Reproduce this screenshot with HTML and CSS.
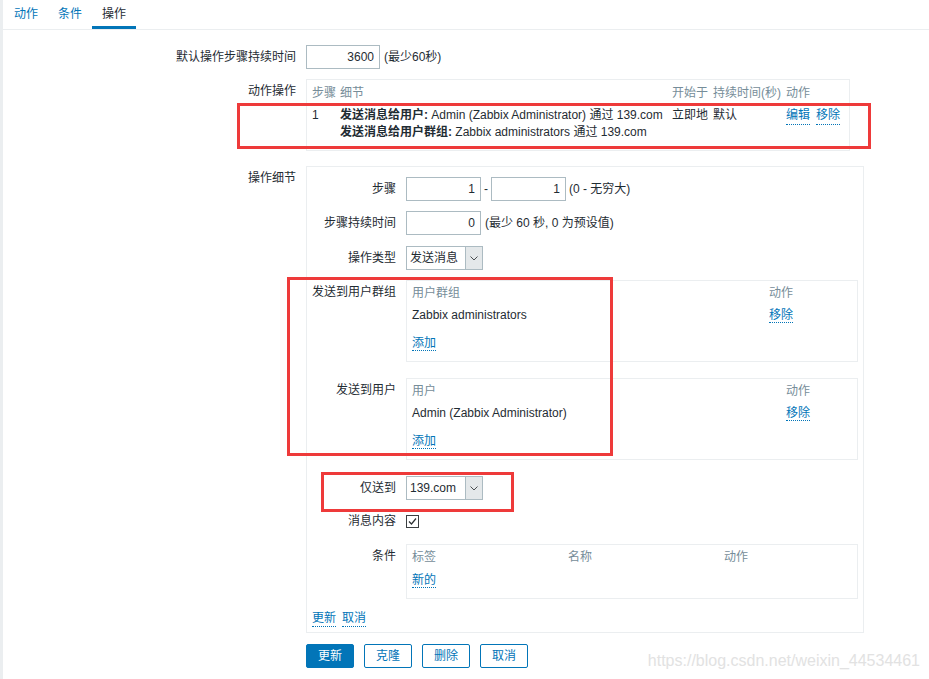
FILE: index.html
```html
<!DOCTYPE html>
<html lang="zh-CN">
<head>
<meta charset="utf-8">
<title>操作</title>
<link rel="stylesheet" href="styles.css">
</head>
<body>
<div class="page">
  <nav class="tabs">
    <a class="tab">动作</a>
    <a class="tab">条件</a>
    <a class="tab active">操作</a>
  </nav>

  <div class="form">
    <div class="row">
      <div class="label">默认操作步骤持续时间</div>
      <div class="field">
        <input class="input w74" value="3600" readonly>
        <span class="hint">(最少60秒)</span>
      </div>
    </div>

    <div class="row gap10">
      <div class="label">动作操作</div>
      <div class="field">
        <div class="ops">
          <div class="ops-grid">
            <div class="th">步骤</div>
            <div class="th">细节</div>
            <div class="th">开始于</div>
            <div class="th">持续时间(秒)</div>
            <div class="th">动作</div>
            <div class="td">1</div>
            <div class="td">
              <div class="nowrap"><b>发送消息给用户:</b> Admin (Zabbix Administrator) 通过 139.com</div>
              <div class="nowrap"><b>发送消息给用户群组:</b> Zabbix administrators 通过 139.com</div>
            </div>
            <div class="td">立即地</div>
            <div class="td">默认</div>
            <div class="td actions"><a class="link">编辑</a><a class="link">移除</a></div>
          </div>
        </div>
      </div>
    </div>

    <div class="row gap15">
      <div class="label">操作细节</div>
      <div class="field">
        <div class="detail">
          <div class="drow">
            <div class="label">步骤</div>
            <div class="field">
              <input class="input w75" value="1" readonly>
              <span class="dash">-</span>
              <input class="input w75" value="1" readonly>
              <span class="hint h3">(0 - 无穷大)</span>
            </div>
          </div>
          <div class="drow m10">
            <div class="label">步骤持续时间</div>
            <div class="field">
              <input class="input w75" value="0" readonly>
              <span class="hint">(最少 60 秒, 0 为预设值)</span>
            </div>
          </div>
          <div class="drow m11">
            <div class="label">操作类型</div>
            <div class="field">
              <div class="select"><span class="val">发送消息</span><span class="arrow"><svg width="8" height="5" viewBox="0 0 8 5"><polyline points="0.5,0.5 4,4 7.5,0.5" fill="none" stroke="#4a4f52" stroke-width="1"/></svg></span></div>
            </div>
          </div>
          <div class="drow m10">
            <div class="label">发送到用户群组</div>
            <div class="field">
              <div class="list">
                <div class="list-grid c357">
                  <div class="th">用户群组</div>
                  <div class="th">动作</div>
                  <div class="item">Zabbix administrators</div>
                  <div class="item"><a class="link">移除</a></div>
                  <div class="add"><a class="link">添加</a></div>
                </div>
              </div>
            </div>
          </div>
          <div class="drow m16">
            <div class="label">发送到用户</div>
            <div class="field">
              <div class="list">
                <div class="list-grid c374">
                  <div class="th">用户</div>
                  <div class="th">动作</div>
                  <div class="item">Admin (Zabbix Administrator)</div>
                  <div class="item"><a class="link">移除</a></div>
                  <div class="add"><a class="link">添加</a></div>
                </div>
              </div>
            </div>
          </div>
          <div class="drow m16">
            <div class="label">仅送到</div>
            <div class="field">
              <div class="select"><span class="val">139.com</span><span class="arrow"><svg width="8" height="5" viewBox="0 0 8 5"><polyline points="0.5,0.5 4,4 7.5,0.5" fill="none" stroke="#4a4f52" stroke-width="1"/></svg></span></div>
            </div>
          </div>
          <div class="drow m9">
            <div class="label">消息内容</div>
            <div class="field tall">
              <svg class="check" width="13" height="13" viewBox="0 0 13 13"><rect x="0.5" y="0.5" width="12" height="12" fill="#fff" stroke="#3b3f42"/><polyline points="3,6.5 5.5,9 10,3.5" fill="none" stroke="#2b2f32" stroke-width="1.2"/></svg>
            </div>
          </div>
          <div class="drow m11">
            <div class="label">条件</div>
            <div class="field">
              <div class="list cond">
                <div class="list-grid c156">
                  <div class="th">标签</div>
                  <div class="th">名称</div>
                  <div class="th">动作</div>
                  <div class="item span3"><a class="link">新的</a></div>
                </div>
              </div>
            </div>
          </div>
          <div class="linkrow">
            <a class="link">更新</a><a class="link">取消</a>
          </div>
        </div>
      </div>
    </div>

    <div class="row gap11">
      <div></div>
      <div class="buttons">
        <button class="btn primary">更新</button>
        <button class="btn">克隆</button>
        <button class="btn">删除</button>
        <button class="btn">取消</button>
      </div>
    </div>
  </div>
</div>

<div class="mark mark1"></div>
<div class="mark mark2"></div>
<div class="mark mark3"></div>
<div class="watermark">https://blog.csdn.net/weixin_44534461</div>
</body>
</html>
```

FILE: styles.css
```css
html, body {
  margin: 0;
  padding: 0;
}
body {
  background: #ebeef0;
  font-family: "Liberation Sans", "Noto Sans CJK SC", sans-serif;
  font-size: 12px;
  line-height: 16px;
  color: #1f2c33;
}
.page {
  margin-left: 3px;
  background: #fff;
  min-height: 679px;
}

/* tabs */
.tabs {
  display: flex;
  height: 29px;
  border-bottom: 1px solid #ebeef0;
  padding-left: 1px;
}
.tab {
  display: block;
  box-sizing: border-box;
  height: 29px;
  padding: 6px 10px 0;
  color: #0275b8;
  cursor: pointer;
}
.tab.active {
  color: #1f2c33;
  border-bottom: 3px solid #0275b8;
}

/* form */
.form {
  padding-top: 15px;
}
.row {
  display: grid;
  grid-template-columns: 293px 1fr;
  column-gap: 10px;
}
.gap10 { margin-top: 10px; }
.gap15 { margin-top: 15px; }
.gap11 { margin-top: 11px; }

.label {
  text-align: right;
  padding-top: 4px;
  white-space: nowrap;
}
.field {
  display: flex;
  align-items: flex-start;
}
.field.tall {
  min-height: 24px;
}
.input {
  box-sizing: border-box;
  height: 24px;
  border: 1px solid #acbbc2;
  border-radius: 0;
  padding: 0 5px;
  margin: 0;
  text-align: right;
  font: inherit;
  color: #1f2c33;
  background: #fff;
  outline: none;
}
.w74 { width: 74px; }
.w75 { width: 75px; }
.hint {
  margin-left: 4px;
  line-height: 24px;
  white-space: nowrap;
}
.hint.h3 { margin-left: 3px; }
.dash {
  width: 10px;
  text-align: center;
  line-height: 24px;
}

/* action operations box */
.ops {
  width: 544px;
  box-sizing: border-box;
  border: 1px solid #ebeef0;
  padding: 5px 0 9px 5px;
}
.ops-grid {
  display: grid;
  grid-template-columns: 28px 332px 41px 73px auto;
}
.th {
  color: #768d99;
  white-space: nowrap;
}
.td {
  margin-top: 6px;
  line-height: 17px;
}
.nowrap { white-space: nowrap; }
.actions {
  display: flex;
  gap: 6px;
  align-items: flex-start;
}
.link {
  color: #0275b8;
  border-bottom: 1px dotted #0275b8;
  text-decoration: none;
  cursor: pointer;
}

/* operation details */
.detail {
  width: 558px;
  box-sizing: border-box;
  border: 1px solid #ebeef0;
  padding: 10px 5px 5px 0;
}
.drow {
  display: grid;
  grid-template-columns: 89px 1fr;
  column-gap: 10px;
}
.m9 { margin-top: 9px; }
.m10 { margin-top: 10px; }
.m11 { margin-top: 11px; }
.m16 { margin-top: 16px; }

.select {
  display: flex;
  box-sizing: border-box;
  width: 77px;
  height: 24px;
  border: 1px solid #acbbc2;
  background: #fff;
}
.select .val {
  flex: 1;
  padding-left: 3px;
  line-height: 22px;
  white-space: nowrap;
}
.select .arrow {
  width: 16px;
  background: #e4e8ea;
  border-left: 1px solid #acbbc2;
  display: flex;
  align-items: center;
  justify-content: center;
}

.list {
  flex: 1;
  border: 1px solid #ebeef0;
  padding: 4px 0 10px 5px;
}
.list-grid {
  display: grid;
}
.c357 { grid-template-columns: 357px auto; }
.c374 { grid-template-columns: 374px auto; }
.c156 { grid-template-columns: 156px 156px auto; }
.item {
  margin-top: 6px;
  white-space: nowrap;
}
.add {
  grid-column: 1 / -1;
  margin-top: 12px;
}
.cond .item { margin-top: 7px; }
.span3 { grid-column: 1 / -1; }

.check {
  display: block;
  margin-top: 6px;
}
.linkrow {
  margin-top: 11px;
  padding-left: 5px;
  display: flex;
  gap: 6px;
}

/* buttons */
.buttons {
  display: flex;
  gap: 10px;
}
.btn {
  box-sizing: border-box;
  width: 48px;
  height: 24px;
  padding: 0;
  margin: 0;
  border: 1px solid #0275b8;
  border-radius: 2px;
  background: #fff;
  color: #0275b8;
  font: inherit;
  cursor: pointer;
}
.btn.primary {
  background: #0275b8;
  color: #fff;
}

/* annotation overlays */
.mark {
  position: absolute;
  box-sizing: border-box;
  border: 3px solid #ee3a3a;
}
.mark1 { left: 237px; top: 103px; width: 634px; height: 46px; }
.mark2 { left: 287px; top: 277px; width: 326px; height: 179px; }
.mark3 { left: 321px; top: 472px; width: 193px; height: 40px; }

.watermark {
  position: absolute;
  right: 9px;
  top: 652px;
  font-size: 16px;
  line-height: 18px;
  color: #e2e2e2;
  white-space: nowrap;
}
```
